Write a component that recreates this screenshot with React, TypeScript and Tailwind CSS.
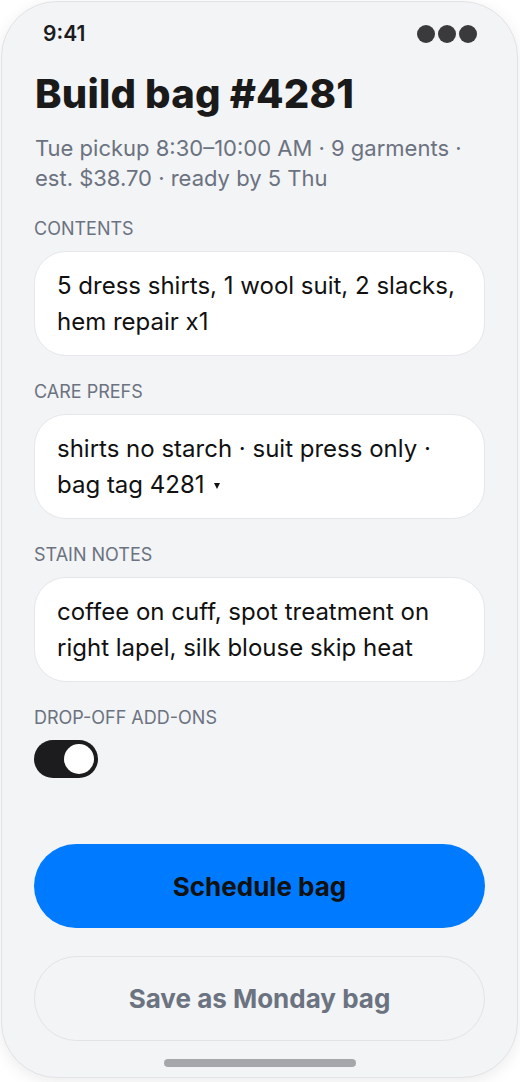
import React from "react";

function Field({ label, children }: { label: string; children: React.ReactNode }) {
  return (
    <div className="flex flex-col">
      <div className="text-[18px] leading-[22px] text-[#6b7280] uppercase">{label}</div>
      <div className="mt-[11px] h-[105px] rounded-[32px] border border-[#e5e7eb] bg-white px-[22px] py-[15.5px] text-[24px] leading-[36px] text-[#111111]">
        {children}
      </div>
    </div>
  );
}

export default function App() {
  return (
    <div className="w-[520px] h-[1082px] bg-white p-[1px]" style={{ fontFamily: "Inter, 'Noto Sans', sans-serif" }}>
      <div className="relative w-[517px] h-[1077px] rounded-[56px] border border-[#e2e3e6] bg-[#f3f4f6] shadow-[0_4px_16px_rgba(0,0,0,0.08)] overflow-hidden flex flex-col">
        <div className="flex items-center justify-between pl-[41px] pr-[40px] pt-[20px] h-[44px]">
          <span className="text-[21px] font-semibold text-[#1c1c1e]">9:41</span>
          <div className="flex gap-[3px]">
            <span className="w-[18px] h-[18px] rounded-full bg-[#3a3a3c]" />
            <span className="w-[18px] h-[18px] rounded-full bg-[#3a3a3c]" />
            <span className="w-[18px] h-[18px] rounded-full bg-[#3a3a3c]" />
          </div>
        </div>
        <div className="px-[32px] flex flex-col">
          <h1 className="mt-[24px] pl-[1px] text-[40px] leading-[48px] font-extrabold tracking-[0.005em] text-[#1a1a1a]">Build bag #4281</h1>
          <p className="mt-[15px] pl-[1px] text-[22px] leading-[30px] text-[#6b7280]">
            Tue pickup 8:30–10:00 AM · 9 garments · est. $38.70 · ready by 5 Thu
          </p>
          <div className="mt-[25px] flex flex-col gap-[25px]">
            <Field label="Contents">5 dress shirts, 1 wool suit, 2 slacks, hem repair x1</Field>
            <Field label="Care prefs">
              shirts no starch · suit press only · bag tag 4281
              <span className="inline-block ml-[9px] w-0 h-0 align-middle border-l-[3.5px] border-r-[3.5px] border-t-[6px] border-l-transparent border-r-transparent border-t-[#111111]" />
            </Field>
            <Field label="Stain notes">coffee on cuff, spot treatment on right lapel, silk blouse skip heat</Field>
            <div className="flex flex-col">
              <div className="text-[18px] leading-[22px] text-[#6b7280] uppercase">Drop-off add-ons</div>
              <div className="mt-[11px] w-[64px] h-[38px] rounded-full bg-[#1c1c1e] flex items-center justify-end pr-[4px]">
                <span className="w-[30px] h-[30px] rounded-full bg-white" />
              </div>
            </div>
          </div>
          <button className="mt-[66px] h-[84px] w-full rounded-full bg-[#007aff] text-[26px] font-bold text-[#111111]">
            Schedule bag
          </button>
          <button className="mt-[28px] h-[85px] w-full rounded-full border-[1.5px] border-[#e2e3e6] text-[26px] font-bold text-[#6b7280]">
            Save as Monday bag
          </button>
        </div>
        <div className="mt-auto mb-[10px] flex justify-center">
          <span className="w-[192px] h-[8px] rounded-full bg-[#a6a7ab]" />
        </div>
      </div>
    </div>
  );
}
